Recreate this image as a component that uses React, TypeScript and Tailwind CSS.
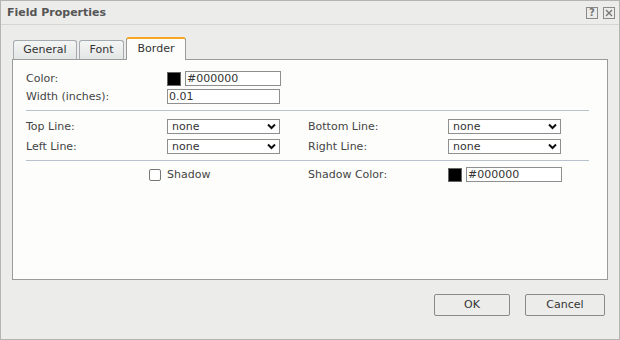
import React from 'react';

const font = "font-['Verdana','DejaVu_Sans',sans-serif]";

const ChevronIcon: React.FC = () => (
  <svg width="9" height="7" viewBox="0 0 9 7" className="shrink-0">
    <path d="M1 1.5 L4.5 5 L8 1.5" fill="none" stroke="#111" strokeWidth="2" />
  </svg>
);

const Select: React.FC<{ value: string }> = ({ value }) => (
  <div className="w-[113px] h-[15px] border border-[#8f8f8f] bg-white flex items-center justify-between pl-[4px] pr-[3px] text-[11px] leading-none text-[#333]">
    <span>{value}</span>
    <ChevronIcon />
  </div>
);

const ColorField: React.FC<{ value: string }> = ({ value }) => (
  <div className="flex items-center gap-[4px]">
    <div className="w-[14px] h-[14px] bg-black border border-[#666]" />
    <div className="w-[96px] h-[15px] border border-[#8f8f8f] bg-white flex items-center pl-[1px] text-[11px] leading-none text-[#333]">
      {value}
    </div>
  </div>
);

const Label: React.FC<{ text: string; w: string }> = ({ text, w }) => (
  <span className={`${w} text-[11px] text-[#444] leading-none`}>{text}</span>
);

const Tab: React.FC<{ label: string; active?: boolean; w: string }> = ({ label, active, w }) => {
  if (active) {
    return (
      <div className={`${w} h-[23px] -mb-px relative z-10 bg-[#fdfefb] border border-[#9a9a9a] border-b-0 border-t-2 border-t-[#f5a623] rounded-t-[3px] flex items-center justify-center text-[11px] text-[#333]`}>
        {label}
      </div>
    );
  }
  return (
    <div className={`${w} h-[19px] bg-gradient-to-b from-[#f4f6f4] to-[#e2e6e4] border border-[#a3abb0] border-b-0 rounded-t-[3px] flex items-center justify-center pt-[1px] text-[11px] text-[#333]`}>
      {label}
    </div>
  );
};

const App: React.FC = () => {
  return (
    <div className={`w-[620px] h-[340px] bg-[#ececea] border border-[#b4b4b4] flex flex-col ${font}`}>
      {/* title bar */}
      <header className="h-[24px] shrink-0 flex items-center justify-between pl-[6px] pr-[4px] border-b border-[#d4d6d2]">
        <h1 className="text-[11px] font-bold text-[#555] leading-none">Field Properties</h1>
        <div className="flex items-center gap-[5px]">
          <div className="w-[12px] h-[12px] border border-[#8a8a8a] flex items-center justify-center text-[10px] font-bold text-[#777] leading-none">?</div>
          <div className="w-[12px] h-[12px] border border-[#8a8a8a] flex items-center justify-center">
            <svg width="8" height="8" viewBox="0 0 8 8">
              <path d="M1 1 L7 7 M7 1 L1 7" stroke="#777" strokeWidth="1.4" />
            </svg>
          </div>
        </div>
      </header>

      <div className="flex-1 flex flex-col pt-[12px] px-[11px]">
        {/* tabs */}
        <div className="flex items-end gap-[2px] pl-px">
          <Tab label="General" w="w-[64px]" />
          <Tab label="Font" w="w-[45px]" />
          <Tab label="Border" w="w-[60px]" active />
        </div>

        {/* panel */}
        <div className="h-[221px] bg-[#fdfefb] border border-[#9a9a9a] pt-[11px] pl-[13px] pr-[18px]">
          <div className="flex items-center h-[15px]">
            <Label text="Color:" w="w-[141px]" />
            <ColorField value="#000000" />
          </div>
          <div className="flex items-center h-[15px] mt-[3px]">
            <Label text="Width (inches):" w="w-[141px]" />
            <div className="w-[113px] h-[15px] border border-[#8f8f8f] bg-white flex items-center pl-[1px] text-[11px] leading-none text-[#333]">0.01</div>
          </div>

          <div className="h-px bg-[#b6c2cc] mt-[6px]" />

          <div className="grid grid-cols-[282px_1fr] gap-y-[5px] mt-[8px]">
            <div className="flex items-center h-[15px]">
              <Label text="Top Line:" w="w-[141px]" />
              <Select value="none" />
            </div>
            <div className="flex items-center h-[15px]">
              <Label text="Bottom Line:" w="w-[140px]" />
              <Select value="none" />
            </div>
            <div className="flex items-center h-[15px]">
              <Label text="Left Line:" w="w-[141px]" />
              <Select value="none" />
            </div>
            <div className="flex items-center h-[15px]">
              <Label text="Right Line:" w="w-[140px]" />
              <Select value="none" />
            </div>
          </div>

          <div className="h-px bg-[#b6c2cc] mt-[6px]" />

          <div className="grid grid-cols-[282px_1fr] mt-[6px]">
            <div className="flex items-center h-[15px] pl-[123px] gap-[6px]">
              <div className="w-[12px] h-[12px] border border-[#777] rounded-[2px] bg-white" />
              <span className="text-[11px] text-[#444] leading-none">Shadow</span>
            </div>
            <div className="flex items-center h-[15px]">
              <Label text="Shadow Color:" w="w-[140px]" />
              <ColorField value="#000000" />
            </div>
          </div>
        </div>

        {/* footer */}
        <div className="flex justify-end gap-[15px] pt-[14px] pr-[3px]">
          <button className="w-[76px] h-[22px] border border-[#8a8a8a] rounded-[2px] bg-[#ececea] text-[11px] text-[#333]">OK</button>
          <button className="w-[80px] h-[22px] border border-[#8a8a8a] rounded-[2px] bg-[#ececea] text-[11px] text-[#333]">Cancel</button>
        </div>
      </div>
    </div>
  );
};

export default App;
